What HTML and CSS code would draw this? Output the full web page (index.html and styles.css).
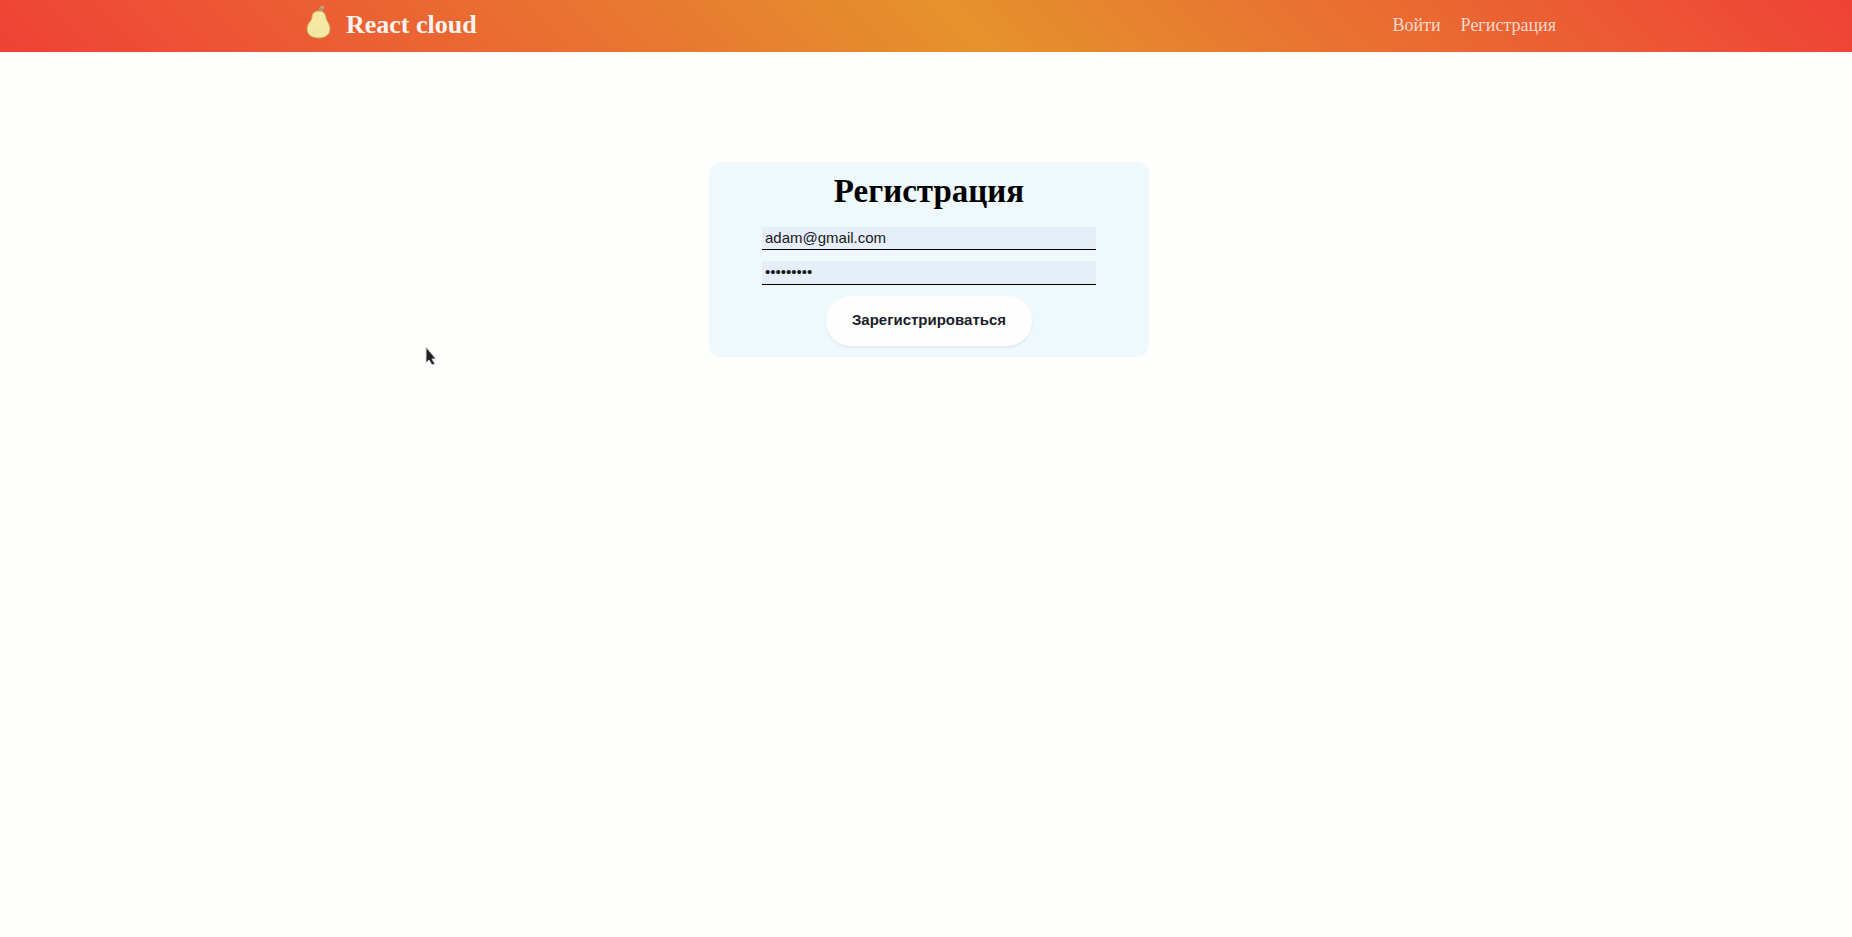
FILE: index.html
```
<!DOCTYPE html>
<html lang="ru">
<head>
<meta charset="utf-8">
<title>React cloud</title>
<link rel="stylesheet" href="styles.css">
</head>
<body>
<header class="navbar">
  <div class="container">
    <svg class="logo" viewBox="0 0 26 34" aria-hidden="true">
      <path class="leaf" d="M13 5C13 1 15 0 18 0C18 3 16 5 14 6Z"/>
      <path class="stem" d="M13 7Q13 5 16 2"/>
      <path class="pear" d="M13 5C9 5 6 7 6 11C6 15 1 17 1 23C1 29 6 32 13 32C20 32 24 28 24 23C24 17 20 15 20 11C19 7 17 5 13 5Z"/>
      <circle class="speck" cx="7" cy="26" r="0.6"/>
      <circle class="speck" cx="9" cy="28" r="0.5"/>
      <circle class="speck" cx="10" cy="25" r="0.4"/>
    </svg>
    <div class="brand">React cloud</div>
    <nav class="links">
      <a class="link" href="#login">Войти</a>
      <a class="link" href="#registration">Регистрация</a>
    </nav>
  </div>
</header>
<main class="page">
  <form class="card">
    <h1 class="title">Регистрация</h1>
    <input class="field" type="email" value="adam@gmail.com" aria-label="Email">
    <input class="field field-password" type="password" value="password1" aria-label="Пароль">
    <button class="submit" type="button">Зарегистрироваться</button>
  </form>
</main>
<svg class="cursor" viewBox="0 0 14 22" aria-hidden="true">
  <path d="M1 1V17L4 14L7 19L10 18L7 13H11Z"/>
</svg>
</body>
</html>
```
FILE: styles.css
```
* {
  box-sizing: border-box;
}

body {
  margin: 0;
  background: #fefefd;
  font-family: "Liberation Serif", "Times New Roman", serif;
}

.navbar {
  padding-left: 6px;
  background: linear-gradient(45deg, #ef4136, #e5922d 52%, #ef4136);
}

.container {
  display: flex;
  align-items: center;
  max-width: 1254px;
  height: 52px;
  margin: 0 auto;
  padding-bottom: 2px;
}

.logo {
  width: 26px;
  height: 34px;
  margin: 0 14px 4px 4px;
}

.pear {
  fill: #f5e8a2;
  stroke: #c9a860;
  stroke-width: 1;
}

.leaf {
  fill: #b5ad90;
}

.stem {
  fill: none;
  stroke: #8a7a58;
  stroke-width: 1;
}

.speck {
  fill: #d9bd6c;
}

.brand {
  color: #fbf3f0;
  font-size: 26px;
  font-weight: bold;
}

.links {
  display: flex;
  gap: 20px;
  margin-left: auto;
}

.link {
  color: #f8d8cc;
  font-size: 18px;
  text-decoration: none;
}

.page {
  display: flex;
  justify-content: center;
  padding: 110px 0 0 6px;
}

.card {
  display: flex;
  flex-direction: column;
  align-items: center;
  width: 440px;
  padding: 10px 53px 11px;
  border-radius: 12px;
  background: #eff8fa;
}

.title {
  margin: 0 0 17px;
  font-size: 33px;
  line-height: 38px;
}

.field {
  width: 100%;
  height: 23px;
  margin-bottom: 11px;
  padding: 0 3px 2px;
  border: 0;
  border-bottom: 1px solid #000;
  border-radius: 0;
  outline: 0;
  background: #e6eef8;
  color: #16191c;
  font-family: "Liberation Sans", Arial, sans-serif;
  font-size: 15px;
}

.field-password {
  height: 24px;
}

.submit {
  height: 50px;
  padding: 0 26px 4px;
  border: 0;
  border-radius: 25px;
  background: #fefefe;
  box-shadow: 0 2px 2px #e2eaf4;
  color: #1a2028;
  font-family: "Liberation Sans", Arial, sans-serif;
  font-size: 15px;
  font-weight: bold;
}

.cursor {
  position: absolute;
  top: 346px;
  left: 425px;
  width: 14px;
  height: 22px;
  fill: #222;
  stroke: #ddd;
  stroke-width: 1;
}
```
